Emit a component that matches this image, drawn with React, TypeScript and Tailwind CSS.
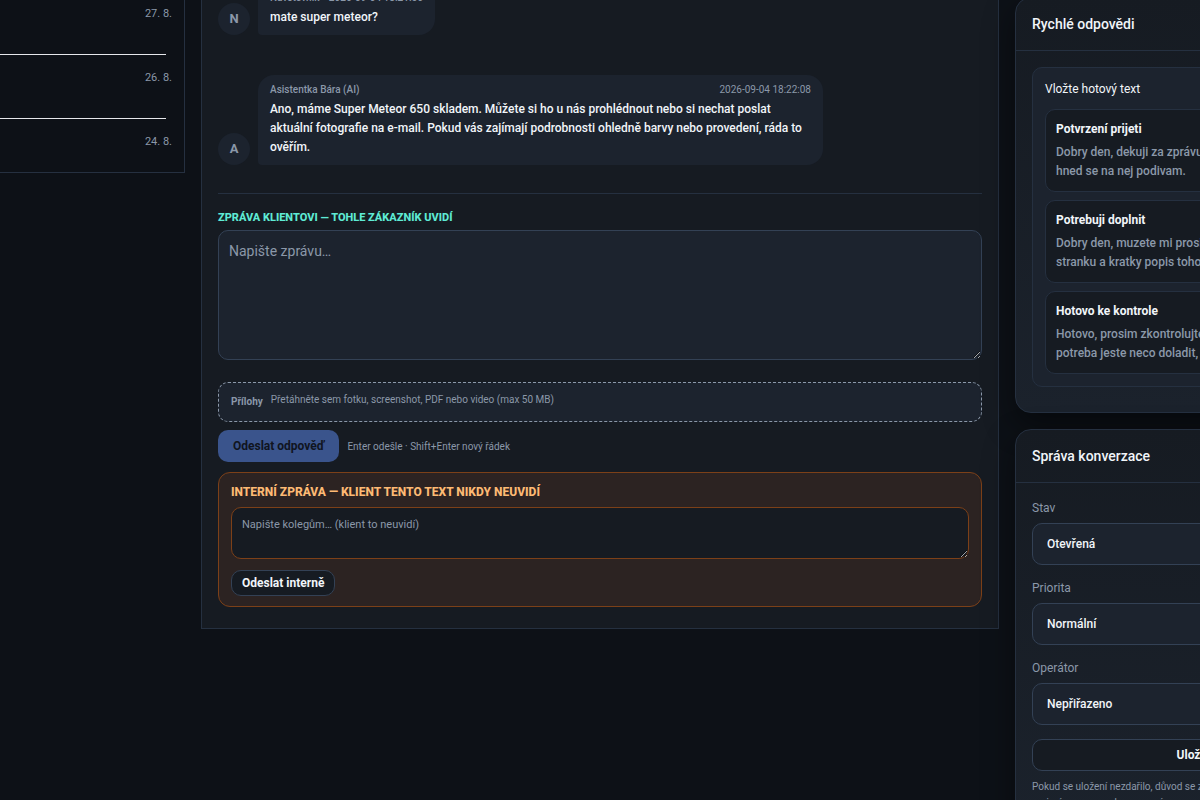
import { useId, useState } from 'react';

const dates = ['27. 8.', '26. 8.', '24. 8.'];

const messages = [
  {
    initial: 'N',
    author: 'Návštěvník',
    time: '2026-09-04 18:21:56',
    text: 'mate super meteor?',
    inlineTime: true,
  },
  {
    initial: 'A',
    author: 'Asistentka Bára (AI)',
    time: '2026-09-04 18:22:08',
    text: 'Ano, máme Super Meteor 650 skladem. Můžete si ho u nás prohlédnout nebo si nechat poslat aktuální fotografie na e-mail. Pokud vás zajímají podrobnosti ohledně barvy nebo provedení, ráda to ověřím.',
    inlineTime: false,
  },
];

const quickReplies = [
  {
    title: 'Potvrzení prijeti',
    text: 'Dobry den, dekuji za zprávu. Mam vse zapsane u sebe, hned se na nej podivam.',
  },
  {
    title: 'Potrebuji doplnit',
    text: 'Dobry den, muzete mi prosim poslat odkaz na danou stranku a kratky popis toho, co se na ni deje?',
  },
  {
    title: 'Hotovo ke kontrole',
    text: 'Hotovo, prosim zkontrolujte vysledek. Kdyby snad byla potreba jeste neco doladit, napiste.',
  },
];

interface PanelProps {
  title: string;
  children: React.ReactNode;
}

const Panel = ({ title, children }: PanelProps) => (
  <section className="rounded-2xl border border-[#253040] bg-linear-to-b from-[#161b22] to-[#1b222c] shadow-[0_12px_32px_rgba(0,0,0,0.45)]">
    <header className="border-b border-[#253040] px-4 py-4">
      <h2 className="text-sm leading-5 font-medium">{title}</h2>
    </header>
    {children}
  </section>
);

interface SelectFieldProps {
  label: string;
  options: string[];
}

const SelectField = ({ label, options }: SelectFieldProps) => {
  const id = useId();
  return (
    <div>
      <label htmlFor={id} className="mb-1.5 block text-xs leading-[18px] text-[#8b98a9]">
        {label}
      </label>
      <select
        id={id}
        className="block h-[42px] w-full appearance-none rounded-[10px] border border-[#334155] bg-[#1c232e] px-3.5 text-xs font-medium"
      >
        {options.map((option) => (
          <option key={option}>{option}</option>
        ))}
      </select>
    </div>
  );
};

const App = () => {
  const [message, setMessage] = useState('');
  const [note, setNote] = useState('');

  return (
    <div className="h-screen overflow-hidden bg-[#0d1117] font-[Roboto,'Noto_Sans',sans-serif] text-[#f1f5f9]">
      <div className="-mr-[208px] grid grid-cols-[185px_minmax(0,1fr)_393px] items-start gap-4">
        <aside className="border-r border-b border-[#253040]">
          <ul>
            {dates.map((date) => (
              <li key={date} className="group">
                <div className="h-[54px] pt-[5px] pr-3 text-right text-[11px] leading-[18px] text-[#8b98a9] group-last:h-11">
                  {date}
                </div>
                <div className="mr-[18px] mb-[9px] border-b border-[#e5e7eb] group-last:hidden" />
              </li>
            ))}
          </ul>
        </aside>

        <main className="-mt-[18px] border border-[#253040] bg-[#161b22] px-4 pb-[21px]">
          <div className="flex flex-col gap-10">
            {messages.map((item) => (
              <article key={item.initial} className="flex items-end gap-2">
                <div className="flex size-8 shrink-0 items-center justify-center rounded-full bg-[#1c232e] text-[13px] font-bold text-[#8b98a9]">
                  {item.initial}
                </div>
                <div className="max-w-[565px] rounded-2xl rounded-bl-sm bg-[#1c232e] px-3 py-2">
                  <div className="mb-[3px] flex justify-between gap-1 text-[10px] leading-[14px] text-[#8b98a9]">
                    <span className="font-medium">{item.author}{item.inlineTime && ' ·'}</span>
                    <time className={item.inlineTime ? 'font-medium' : ''}>{item.time}</time>
                  </div>
                  <p className="text-xs leading-[19px] font-medium">{item.text}</p>
                </div>
              </article>
            ))}
          </div>

          <form className="mt-7 border-t border-[#253040] pt-4" onSubmit={(e) => e.preventDefault()}>
            <label htmlFor="message" className="mb-1 block text-[11px] leading-4 font-extrabold text-[#5eead4] uppercase">
              Zpráva klientovi — tohle zákazník uvidí
            </label>
            <textarea
              id="message"
              value={message}
              onChange={(e) => setMessage(e.target.value)}
              placeholder="Napište zprávu…"
              className="block h-[130px] w-full rounded-[10px] border border-[#334155] bg-[#1c232e] px-2.5 py-2 text-sm leading-6 placeholder:text-[#8b98a9]"
            />
            <div className="mt-[22px] flex h-10 gap-2 rounded-[10px] border border-dashed border-[#8b98a9] bg-[#1c232e] px-3 text-[10px] text-[#8b98a9]">
              <span className="leading-[38px] font-bold">Přílohy</span>
              <span className="leading-[34px]">Přetáhněte sem fotku, screenshot, PDF nebo video (max 50 MB)</span>
            </div>
            <div className="mt-2 flex items-center gap-2">
              <button
                type="submit"
                className="h-8 rounded-[10px] bg-[#3a548c] px-[15px] text-xs font-bold text-[#10151f]"
              >
                Odeslat odpověď
              </button>
              <span className="text-[10px] text-[#8b98a9]">Enter odešle · Shift+Enter nový řádek</span>
            </div>
          </form>

          <form
            className="mt-2.5 rounded-xl border border-[#7c4018] bg-[#2c2322] px-3 pt-2.5 pb-2.5"
            onSubmit={(e) => e.preventDefault()}
          >
            <label htmlFor="note" className="mb-1.5 block text-xs leading-[18px] font-extrabold text-[#fdba74] uppercase">
              Interní zpráva — klient tento text nikdy neuvidí
            </label>
            <textarea
              id="note"
              value={note}
              onChange={(e) => setNote(e.target.value)}
              placeholder="Napište kolegům… (klient to neuvidí)"
              className="block h-[52px] w-full rounded-[10px] border border-[#7c4018] bg-[#161b22] px-2.5 py-2 text-[11px] leading-[18px] placeholder:text-[#8b98a9]"
            />
            <button
              type="submit"
              className="mt-[11px] block h-[26px] rounded-[10px] border border-[#334155] bg-[#161b22] px-2.5 text-xs leading-6 font-bold"
            >
              Odeslat interně
            </button>
          </form>
        </main>

        <aside className="-mt-[3px] flex flex-col gap-4">
          <Panel title="Rychlé odpovědi">
            <div className="px-4 pt-4 pb-[25px]">
              <div className="rounded-[10px] border border-[#253040] bg-[#1c232e] p-3">
                <h3 className="mb-[11px] text-xs leading-[18px]">Vložte hotový text</h3>
                <div className="flex flex-col gap-2">
                  {quickReplies.map((reply) => (
                    <button
                      key={reply.title}
                      type="button"
                      className="rounded-[10px] border border-[#253040] bg-[#161b22] p-2.5 text-left text-xs font-bold"
                    >
                      <span className="mb-[5px] block leading-[18px]">{reply.title}</span>
                      <span className="block leading-[19px] font-medium text-[#8b98a9]">{reply.text}</span>
                    </button>
                  ))}
                </div>
              </div>
            </div>
          </Panel>

          <Panel title="Správa konverzace">
            <form className="flex flex-col gap-3.5 p-4" onSubmit={(e) => e.preventDefault()}>
              <SelectField label="Stav" options={['Otevřená', 'Uzavřená']} />
              <SelectField label="Priorita" options={['Normální', 'Vysoká']} />
              <SelectField label="Operátor" options={['Nepřiřazeno']} />
              <div>
                <button
                  type="submit"
                  className="block h-8 w-full rounded-[10px] border border-[#334155] bg-[#161b22] text-xs font-bold"
                >
                  Uložit změny
                </button>
                <p className="mt-2 text-[10px] leading-4 text-[#8b98a9]">
                  Pokud se uložení nezdařilo, důvod se zobrazí přímo zde. Změny se jinak ihned projeví v seznamu konverzací.
                </p>
              </div>
            </form>
          </Panel>
        </aside>
      </div>
    </div>
  );
};

export default App;
